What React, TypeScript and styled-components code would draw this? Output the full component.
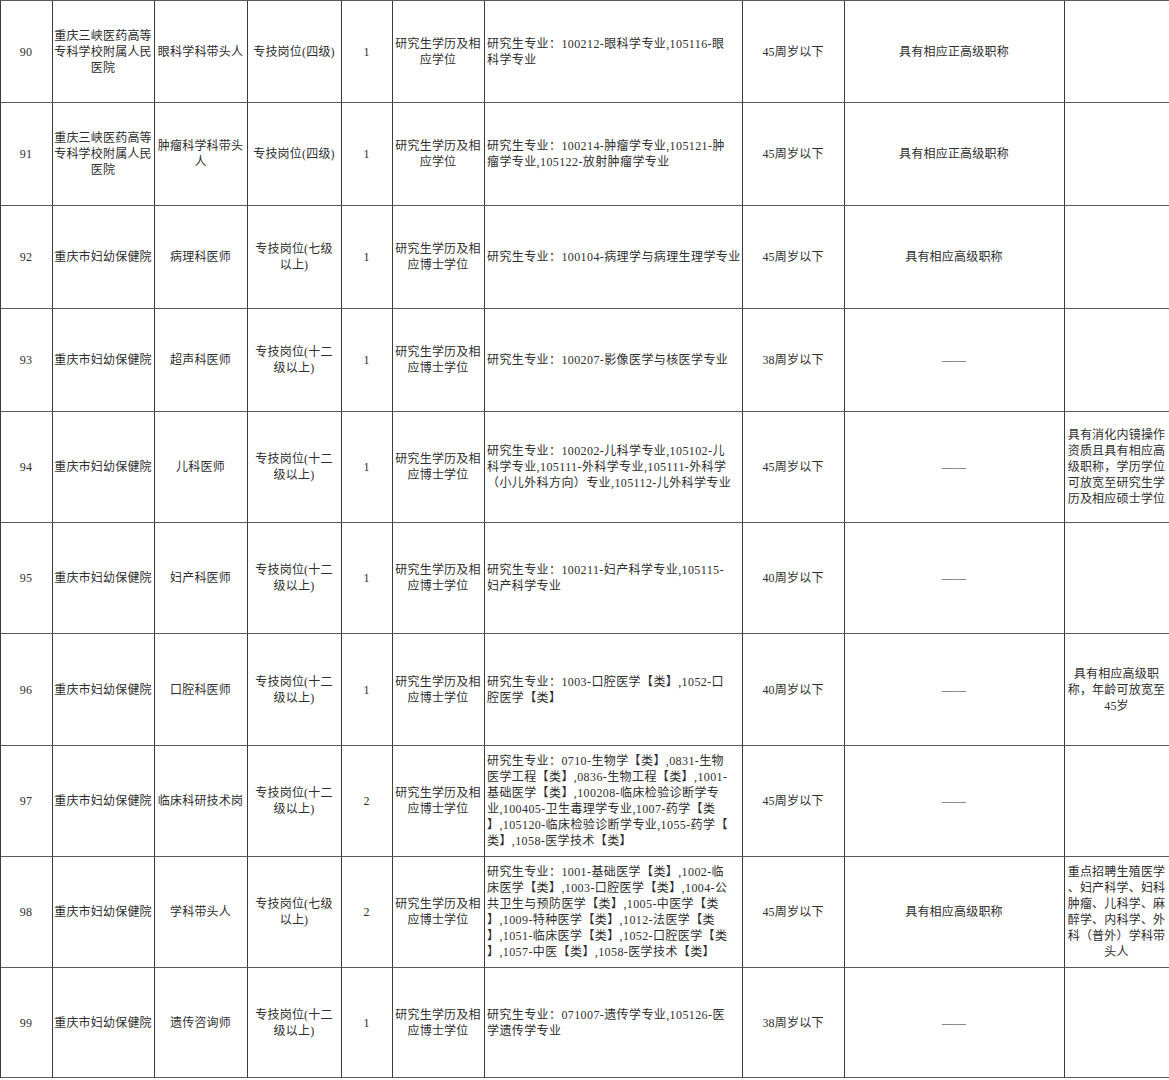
import React from "react";
import styled, {createGlobalStyle} from "styled-components";

const GlobalStyle = createGlobalStyle`
    html, body {
        margin: 0;
        padding: 0;
        background: #ffffff;
        overflow: hidden;
    }
`

const COLUMNS = "52px 102px 93px 94px 51px 92px 258px 102px 220px 104px";

const StyledTable = styled.div`
    display: flex;

    flex-direction: column;

    width: 1169px;

    border-top: 1px solid #5a5a5a;
    border-left: 1px solid #3c3c3c;

    font-family: "Liberation Serif", "Noto Sans CJK SC", serif;
    font-size: 12px;
    line-height: 16px;
    letter-spacing: .2px;
    color: #2e2e2e;
`

const StyledRow = styled.div<{ $height: number }>`
    display: grid;

    grid-template-columns: ${COLUMNS};

    height: ${({$height}) => $height}px;
`

const StyledCell = styled.div<{ $left?: boolean, $last?: boolean }>`
    display: flex;

    align-items: center;
    justify-content: ${({$left}) => $left ? "flex-start" : "center"};

    box-sizing: border-box;
    padding: ${({$left}) => $left ? "0 0 0 2px" : "0 2px 0 1px"};

    border-bottom: 1px solid #5a5a5a;
    border-right: ${({$last}) => $last ? "none" : "1px solid #3c3c3c"};

    overflow: hidden;
`

const StyledText = styled.span<{ $left?: boolean }>`
    white-space: pre;
    text-align: ${({$left}) => $left ? "left" : "center"};
    letter-spacing: ${({$left}) => $left ? ".4px" : ".2px"};
`

type Row = {
	no: string
	org: string
	post: string
	level: string
	count: string
	degree: string
	major: string
	age: string
	title: string
	note: string
	height: number
}

const SANXIA = "重庆三峡医药高等\n专科学校附属人民\n医院";
const FUYOU = "重庆市妇幼保健院";
const LEVEL12 = "专技岗位(十二\n级以上)";
const LEVEL7 = "专技岗位(七级\n以上)";
const DOCTOR = "研究生学历及相\n应博士学位";
const DASH = "——";

const rows: Row[] = [
	{
		no: "90", org: SANXIA, post: "眼科学科带头人", level: "专技岗位(四级)", count: "1",
		degree: "研究生学历及相\n应学位",
		major: "研究生专业：100212-眼科学专业,105116-眼\n科学专业",
		age: "45周岁以下", title: "具有相应正高级职称", note: "", height: 102
	},
	{
		no: "91", org: SANXIA, post: "肿瘤科学科带头\n人", level: "专技岗位(四级)", count: "1",
		degree: "研究生学历及相\n应学位",
		major: "研究生专业：100214-肿瘤学专业,105121-肿\n瘤学专业,105122-放射肿瘤学专业",
		age: "45周岁以下", title: "具有相应正高级职称", note: "", height: 103
	},
	{
		no: "92", org: FUYOU, post: "病理科医师", level: LEVEL7, count: "1", degree: DOCTOR,
		major: "研究生专业：100104-病理学与病理生理学专业",
		age: "45周岁以下", title: "具有相应高级职称", note: "", height: 103
	},
	{
		no: "93", org: FUYOU, post: "超声科医师", level: LEVEL12, count: "1", degree: DOCTOR,
		major: "研究生专业：100207-影像医学与核医学专业",
		age: "38周岁以下", title: DASH, note: "", height: 103
	},
	{
		no: "94", org: FUYOU, post: "儿科医师", level: LEVEL12, count: "1", degree: DOCTOR,
		major: "研究生专业：100202-儿科学专业,105102-儿\n科学专业,105111-外科学专业,105111-外科学\n（小儿外科方向）专业,105112-儿外科学专业",
		age: "45周岁以下", title: DASH,
		note: "具有消化内镜操作\n资质且具有相应高\n级职称，学历学位\n可放宽至研究生学\n历及相应硕士学位",
		height: 111
	},
	{
		no: "95", org: FUYOU, post: "妇产科医师", level: LEVEL12, count: "1", degree: DOCTOR,
		major: "研究生专业：100211-妇产科学专业,105115-\n妇产科学专业",
		age: "40周岁以下", title: DASH, note: "", height: 111
	},
	{
		no: "96", org: FUYOU, post: "口腔科医师", level: LEVEL12, count: "1", degree: DOCTOR,
		major: "研究生专业：1003-口腔医学【类】,1052-口\n腔医学【类】",
		age: "40周岁以下", title: DASH,
		note: "具有相应高级职\n称，年龄可放宽至\n45岁",
		height: 112
	},
	{
		no: "97", org: FUYOU, post: "临床科研技术岗", level: LEVEL12, count: "2", degree: DOCTOR,
		major: "研究生专业：0710-生物学【类】,0831-生物\n医学工程【类】,0836-生物工程【类】,1001-\n基础医学【类】,100208-临床检验诊断学专\n业,100405-卫生毒理学专业,1007-药学【类\n】,105120-临床检验诊断学专业,1055-药学【\n类】,1058-医学技术【类】",
		age: "45周岁以下", title: DASH, note: "", height: 111
	},
	{
		no: "98", org: FUYOU, post: "学科带头人", level: LEVEL7, count: "2", degree: DOCTOR,
		major: "研究生专业：1001-基础医学【类】,1002-临\n床医学【类】,1003-口腔医学【类】,1004-公\n共卫生与预防医学【类】,1005-中医学【类\n】,1009-特种医学【类】,1012-法医学【类\n】,1051-临床医学【类】,1052-口腔医学【类\n】,1057-中医【类】,1058-医学技术【类】",
		age: "45周岁以下", title: "具有相应高级职称",
		note: "重点招聘生殖医学\n、妇产科学、妇科\n肿瘤、儿科学、麻\n醉学、内科学、外\n科（普外）学科带\n头人",
		height: 111
	},
	{
		no: "99", org: FUYOU, post: "遗传咨询师", level: LEVEL12, count: "1", degree: DOCTOR,
		major: "研究生专业：071007-遗传学专业,105126-医\n学遗传学专业",
		age: "38周岁以下", title: DASH, note: "", height: 110
	},
]

export default function App() {
	return (
		<>
			<GlobalStyle/>
			<StyledTable>
				{rows.map(row => (
					<StyledRow key={row.no} $height={row.height}>
						<StyledCell><StyledText>{row.no}</StyledText></StyledCell>
						<StyledCell><StyledText>{row.org}</StyledText></StyledCell>
						<StyledCell><StyledText>{row.post}</StyledText></StyledCell>
						<StyledCell><StyledText>{row.level}</StyledText></StyledCell>
						<StyledCell><StyledText>{row.count}</StyledText></StyledCell>
						<StyledCell><StyledText>{row.degree}</StyledText></StyledCell>
						<StyledCell $left><StyledText $left>{row.major}</StyledText></StyledCell>
						<StyledCell><StyledText>{row.age}</StyledText></StyledCell>
						<StyledCell><StyledText>{row.title}</StyledText></StyledCell>
						<StyledCell $last><StyledText>{row.note}</StyledText></StyledCell>
					</StyledRow>
				))}
			</StyledTable>
		</>
	)
}
